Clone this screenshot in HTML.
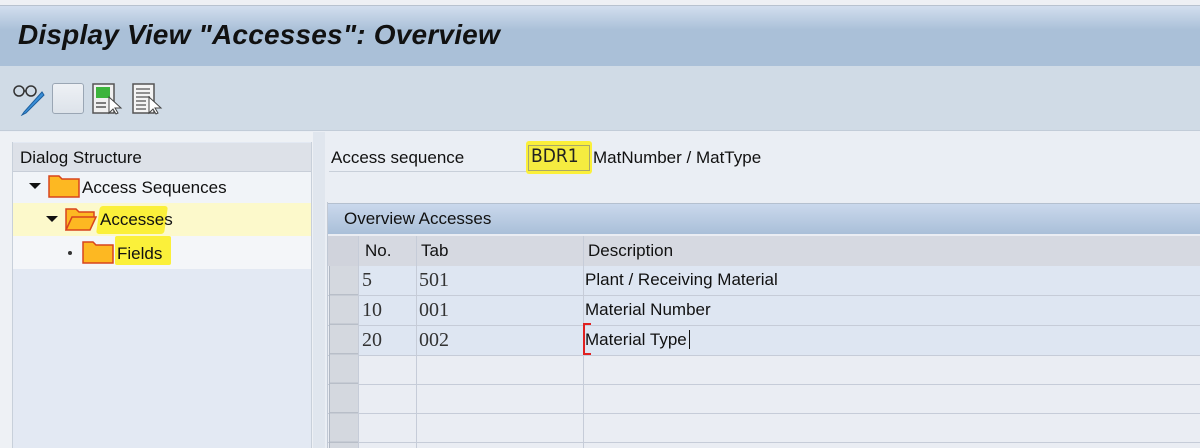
<!DOCTYPE html>
<html><head><style>
*{margin:0;padding:0;box-sizing:border-box}
body{width:1200px;height:448px;overflow:hidden;background:#eaeef4;font-family:"Liberation Sans","DejaVu Sans",sans-serif;position:relative;color:#111}
.a{position:absolute}
.t{font-size:17px;white-space:nowrap}
.m{font-family:"Liberation Serif",serif;font-size:20px;white-space:nowrap;color:#333}
</style></head><body>
<div class="a" style="left:0;top:0;width:1200px;height:6px;background:#eef0f4;border-bottom:1px solid #b8c2cf"></div>
<div class="a" style="left:0;top:6px;width:1200px;height:60px;background:linear-gradient(#d2deee,#aac0d8 40%,#aac0d8)"></div>
<div class="a" style="left:18px;top:19px;font-size:28px;font-weight:bold;font-style:italic;font-family:'Liberation Sans',sans-serif;letter-spacing:0.2px;color:#111">Display View "Accesses": Overview</div>
<div class="a" style="left:0;top:66px;width:1200px;height:65px;background:#d0dbe6;border-bottom:1px solid #c2ccd8"></div>
<svg class="a" style="left:12px;top:82px" width="36" height="34" viewBox="0 0 36 34">
<circle cx="7" cy="9" r="5" fill="none" stroke="#333" stroke-width="1.5"/><circle cx="19" cy="9" r="5" fill="none" stroke="#333" stroke-width="1.5"/>
<path d="M12 9h2" stroke="#333" stroke-width="1.5"/>
<path d="M30 10 L12 30 L10 33 L14 31 L32 13 Z" fill="#3a8fd8" stroke="#1d5f9e" stroke-width="1"/>
</svg>
<div class="a" style="left:52px;top:83px;width:32px;height:31px;border:1px solid #9aa6b4;border-radius:3px;background:linear-gradient(#eef1f5,#dde3ea)"></div>
<svg class="a" style="left:92px;top:83px" width="32" height="32" viewBox="0 0 32 32">
<rect x="1" y="1" width="21" height="29" fill="#f0f0f0" stroke="#555" stroke-width="1.5"/>
<rect x="4" y="4" width="14" height="11" fill="#3cb43c"/>
<path d="M4 20h10M4 24h10" stroke="#555" stroke-width="1.5"/>
<path d="M17 14 L17 30 L21 26 L24 31 L26 30 L23 25 L29 25 Z" fill="#fff" stroke="#444" stroke-width="1"/>
</svg>
<svg class="a" style="left:132px;top:83px" width="32" height="32" viewBox="0 0 32 32">
<rect x="1" y="1" width="21" height="29" fill="#f4f4f4" stroke="#555" stroke-width="1.5"/>
<path d="M4 6h14M4 10h14M4 14h14M4 18h10M4 22h10M4 26h10" stroke="#555" stroke-width="1.2"/>
<path d="M17 14 L17 30 L21 26 L24 31 L26 30 L23 25 L29 25 Z" fill="#fff" stroke="#444" stroke-width="1"/>
</svg>
<div class="a" style="left:0;top:132px;width:313px;height:316px;background:#eef1f5"></div>
<div class="a" style="left:313px;top:132px;width:12px;height:316px;background:#e0e6ee"></div>
<div class="a" style="left:12px;top:142px;width:300px;height:306px;background:#e3e9f3;border-left:1px solid #c8d0da;border-right:1px solid #c8d0da"></div>
<div class="a" style="left:13px;top:143px;width:298px;height:29px;background:#dde1e8;border-bottom:1px solid #c8ced8"></div>
<div class="a t" style="left:20px;top:148px">Dialog Structure</div>
<div class="a" style="left:13px;top:172px;width:298px;height:31px;background:#f1f4f8"></div>
<div class="a" style="left:13px;top:203px;width:298px;height:33px;background:#fcf9cb"></div>
<div class="a" style="left:13px;top:236px;width:298px;height:33px;background:#f4f6f9"></div>
<div class="a" style="left:29px;top:183px;border-left:6px solid transparent;border-right:6px solid transparent;border-top:6px solid #111"></div>
<svg class="a" style="left:48px;top:174px" width="32" height="24" viewBox="0 0 32 24"><path d="M1 2h10l3 3h17v18H1Z" fill="#fdb822" stroke="#d8441c" stroke-width="1.5"/></svg>
<div class="a t" style="left:82px;top:178px">Access Sequences</div>
<div class="a" style="left:46px;top:216px;border-left:6px solid transparent;border-right:6px solid transparent;border-top:6px solid #111"></div>
<svg class="a" style="left:65px;top:207px" width="32" height="25" viewBox="0 0 32 25"><path d="M1 2h10l3 3h15v6H7L1 23Z" fill="#fdb822" stroke="#d8441c" stroke-width="1.5"/><path d="M1 23 L7 10 H31 L25 23Z" fill="#fdb822" stroke="#d8441c" stroke-width="1.5"/></svg>
<div class="a" style="left:98px;top:206px;width:68px;height:28px;background:#fbf03a;border-radius:3px;transform:skewX(-8deg)"></div>
<div class="a t" style="left:100px;top:210px">Accesses</div>
<div class="a" style="left:68px;top:251px;width:4px;height:4px;border-radius:2px;background:#333"></div>
<svg class="a" style="left:82px;top:240px" width="32" height="24" viewBox="0 0 32 24"><path d="M1 2h10l3 3h17v18H1Z" fill="#fdb822" stroke="#d8441c" stroke-width="1.5"/></svg>
<div class="a" style="left:115px;top:236px;width:56px;height:29px;background:#fbf03a;border-radius:2px"></div>
<div class="a t" style="left:117px;top:244px">Fields</div>
<div class="a t" style="left:331px;top:148px">Access sequence</div>
<div class="a" style="left:329px;top:171px;width:262px;height:1px;background:#c8cfd9"></div>
<div class="a" style="left:526px;top:141px;width:66px;height:33px;background:#fbf03a;border-radius:3px"></div>
<div class="a" style="left:528px;top:145px;width:62px;height:26px;border:1px solid #a9a86a;background:#f5ec40"></div>
<div class="a" style="left:531px;top:145px;font-family:'DejaVu Sans Condensed','DejaVu Sans',sans-serif;font-size:19px;color:#222">BDR1</div>
<div class="a t" style="left:593px;top:148px">MatNumber / MatType</div>
<div class="a" style="left:327px;top:202px;width:873px;height:246px;background:#eaedf3;border-left:1px solid #c0c8d4"></div>
<div class="a" style="left:328px;top:203px;width:872px;height:31px;background:linear-gradient(#cad8ec,#a9bfd8);border-top:1px solid #b4c0cf"></div>
<div class="a t" style="left:344px;top:209px">Overview Accesses</div>
<div class="a" style="left:328px;top:236px;width:872px;height:30px;background:#d0d3dc"></div>
<div class="a" style="left:358px;top:236px;width:842px;height:30px;background:#d6d9e1"></div>
<div class="a t" style="left:365px;top:241px">No.</div>
<div class="a t" style="left:421px;top:241px">Tab</div>
<div class="a t" style="left:588px;top:241px">Description</div>
<div class="a" style="left:358px;top:266px;width:842px;height:90px;background:#dee6f2"></div>
<div class="a" style="left:328px;top:295px;width:872px;height:1px;background:#c6ccd8"></div>
<div class="a" style="left:328px;top:325px;width:872px;height:1px;background:#c6ccd8"></div>
<div class="a" style="left:328px;top:355px;width:872px;height:1px;background:#c6ccd8"></div>
<div class="a" style="left:328px;top:384px;width:872px;height:1px;background:#c6ccd8"></div>
<div class="a" style="left:328px;top:413px;width:872px;height:1px;background:#c6ccd8"></div>
<div class="a" style="left:328px;top:442px;width:872px;height:1px;background:#c6ccd8"></div>
<div class="a" style="left:358px;top:236px;width:1px;height:212px;background:#c6ccd8"></div>
<div class="a" style="left:416px;top:236px;width:1px;height:212px;background:#c6ccd8"></div>
<div class="a" style="left:583px;top:236px;width:1px;height:212px;background:#c6ccd8"></div>
<div class="a" style="left:329px;top:266px;width:29px;height:182px;background:repeating-linear-gradient(#d4d8df 0,#d4d8df 28px,#b8bec8 28px,#b8bec8 29.5px);border-left:1px solid #b0b8c4"></div>
<div class="m a" style="left:362px;top:269px">5</div><div class="m a" style="left:419px;top:269px">501</div><div class="a t" style="left:585px;top:270px">Plant / Receiving Material</div>
<div class="m a" style="left:362px;top:299px">10</div><div class="m a" style="left:419px;top:299px">001</div><div class="a t" style="left:585px;top:300px">Material Number</div>
<div class="m a" style="left:362px;top:329px">20</div><div class="m a" style="left:419px;top:329px">002</div><div class="a t" style="left:585px;top:330px">Material Type</div>
<div class="a" style="left:583px;top:323px;width:8px;height:32px;border:2px solid #e02020;border-right:none"></div>
<div class="a" style="left:689px;top:330px;width:1px;height:19px;background:#111"></div>
</body></html>
